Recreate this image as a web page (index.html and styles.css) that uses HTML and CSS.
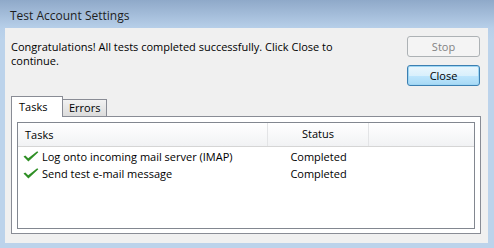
FILE: index.html
```html
<!DOCTYPE html>
<html lang="en">
<head>
    <meta charset="UTF-8" />
    <meta name="viewport" content="width=device-width, initial-scale=1.0" />
    <title>Test Account Settings</title>
    <link rel="stylesheet" href="styles.css">
</head>
<body>
    <div class="window">
        <div class="titlebar">Test Account Settings</div>
        <div class="client">
            <div class="top">
                <p class="message">Congratulations! All tests completed successfully. Click Close to<br>continue.</p>
                <div class="buttons">
                    <button class="btn" disabled>Stop</button>
                    <button class="btn default">Close</button>
                </div>
            </div>

            <div class="tabs">
                <div class="tab active">Tasks</div>
                <div class="tab">Errors</div>
            </div>

            <div class="panel">
                <div class="listbox">
                    <div class="list-header">
                        <div class="col col-task">Tasks</div>
                        <div class="col col-status">Status</div>
                        <div class="col col-rest"></div>
                    </div>
                    <div class="rows">
                        <div class="list-row">
                            <div class="col col-task">
                                <svg class="check" viewBox="0 0 16 11" width="16" height="11">
                                    <path d="M0.5 5.6 L2.3 4.4 L5.2 7.2 L14.2 0.3 L15.3 1.2 L5.4 10.6 Z" fill="#2f8f25" />
                                </svg>
                                Log onto incoming mail server (IMAP)
                            </div>
                            <div class="col col-status">Completed</div>
                        </div>
                        <div class="list-row">
                            <div class="col col-task">
                                <svg class="check" viewBox="0 0 16 11" width="16" height="11">
                                    <path d="M0.5 5.6 L2.3 4.4 L5.2 7.2 L14.2 0.3 L15.3 1.2 L5.4 10.6 Z" fill="#2f8f25" />
                                </svg>
                                Send test e-mail message
                            </div>
                            <div class="col col-status">Completed</div>
                        </div>
                    </div>
                </div>
            </div>
        </div>
    </div>
</body>
</html>
```

FILE: styles.css
```css
body {
    margin: 0;
    padding: 0;
    background: #bcd3eb;
    font-family: 'Open Sans', 'Noto Sans', sans-serif;
    font-size: 11px;
    color: #000;
}
.window {
    width: 494px;
    height: 248px;
    overflow: hidden;
    background: linear-gradient(to bottom, #8fa9c9 0px, #b7cfe9 28px, #bcd3eb 40px);
}
.titlebar {
    height: 28px;
    box-sizing: border-box;
    padding: 8px 0 0 10px;
    line-height: 16px;
    font-size: 12px;
    color: #1e1e1e;
}
.client {
    margin: 0 6px 5px 5px;
    height: 215px;
    background: #f0f0f0;
    overflow: hidden;
}
.top {
    display: flex;
    justify-content: space-between;
    align-items: flex-start;
    padding: 8px 8px 0 6px;
}
.message {
    margin: 4px 0 0 0;
    line-height: 14px;
}
.buttons {
    display: flex;
    flex-direction: column;
    gap: 8px;
}
.btn {
    width: 73px;
    height: 21px;
    font-family: inherit;
    font-size: 11px;
    border: 1px solid #707070;
    border-radius: 3px;
    background: linear-gradient(to bottom, #f2f2f2 0%, #ebebeb 50%, #dddddd 51%, #cfcfcf 100%);
    color: #000;
    padding: 0;
}
.btn:disabled {
    border-color: #adb2b5;
    background: #f4f4f4;
    color: #838383;
}
.btn.default {
    border-color: #3c7fb1;
    background: linear-gradient(to bottom, #eaf6fd 0%, #d9f0fc 50%, #bee6fd 51%, #a7d9f5 100%);
    box-shadow: inset 0 0 0 1px #9ed6f4;
}
.tabs {
    display: flex;
    align-items: flex-end;
    height: 20px;
    margin-top: 10px;
    padding-left: 6px;
}
.tab {
    box-sizing: border-box;
    height: 17px;
    padding: 0 6px;
    line-height: 16px;
    border: 1px solid #898c95;
    border-bottom: none;
    border-left: none;
    background: linear-gradient(to bottom, #f2f2f2, #dcdcdc);
}
.tab.active {
    position: relative;
    height: 21px;
    margin-bottom: -1px;
    width: 52px;
    padding: 2px 0 0 7px;
    border-left: 1px solid #898c95;
    background: #fff;
}
.tab:not(.active) {
    width: 44px;
}
.panel {
    margin: 0 7px 0 6px;
    height: 118px;
    box-sizing: border-box;
    padding: 5px 5px 4px 5px;
    border: 1px solid #898c95;
    background: #fff;
}
.listbox {
    height: 107px;
    box-sizing: border-box;
    border: 1px solid #828790;
    background: #fff;
}
.list-header {
    display: flex;
    height: 24px;
    box-sizing: border-box;
    border-bottom: 1px solid #d5d5d5;
    background: linear-gradient(to bottom, #ffffff, #f1f2f4);
    line-height: 22px;
}
.list-header .col {
    border-right: 1px solid #e3e4e6;
}
.list-header .col-rest {
    flex: 1;
    border-right: none;
}
.col-task {
    width: 250px;
    box-sizing: border-box;
    padding-left: 7px;
    display: flex;
    align-items: center;
}
.col-status {
    width: 101px;
    box-sizing: border-box;
    text-align: center;
}
.rows {
    padding-top: 1px;
}
.list-row {
    display: flex;
    height: 17px;
    line-height: 17px;
}
.list-row .col-task {
    padding-left: 5px;
}
.check {
    margin-right: 3px;
    flex-shrink: 0;
}
```
